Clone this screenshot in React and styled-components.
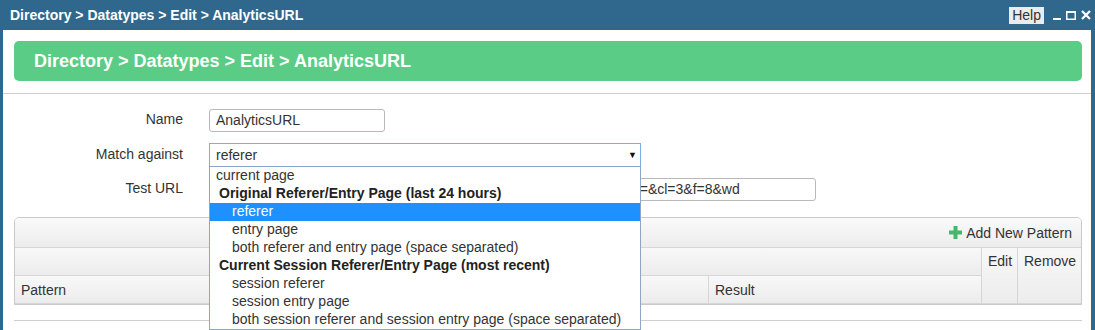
import React from "react";
import styled, { createGlobalStyle } from "styled-components";

const GlobalStyle = createGlobalStyle`
  html, body {
    margin: 0;
    padding: 0;
    background: #fff;
  }
  body {
    font-family: "Liberation Sans", Arial, sans-serif;
    font-size: 14px;
    color: #333;
  }
`;

const Window = styled.div`
  width: 1095px;
  height: 330px;
  overflow: hidden;
  display: flex;
  flex-direction: column;
  background: #2f688c;
`;

const TitleBar = styled.div`
  height: 30px;
  flex: none;
  display: flex;
  align-items: center;
  padding: 0 4px 0 10px;
  color: #fff;
  font-weight: bold;
  font-size: 14px;
`;

const TitleText = styled.div`
  flex: 1;
`;

const HelpButton = styled.button`
  height: 17px;
  padding: 0 3px;
  border: none;
  background: #ececec;
  color: #333;
  font-family: inherit;
  font-size: 14px;
  line-height: 17px;
  margin-right: 4px;
`;

const WinIcon = styled.svg`
  display: block;
  margin-left: 5px;
`;

const Body = styled.div`
  flex: 1;
  background: #fff;
  margin: 0 4px 0 3px;
  padding-top: 11px;
`;

const Banner = styled.div`
  height: 40px;
  margin: 0 9px 0 11px;
  border-radius: 5px;
  background: #5acc85;
  color: #fff;
  font-weight: bold;
  font-size: 18px;
  display: flex;
  align-items: center;
  padding-left: 20px;
`;

const Divider = styled.div`
  height: 1px;
  background: #cfcfcf;
  margin: ${(p) => p.$margin};
`;

const Form = styled.div`
  display: grid;
  grid-template-columns: 180px auto;
  column-gap: 26px;
  row-gap: 11px;
  padding-top: 15px;
  justify-items: start;
`;

const Label = styled.div`
  justify-self: end;
  align-self: center;
  margin-bottom: 3px;
  color: #333;
`;

const TextInput = styled.div`
  box-sizing: border-box;
  width: ${(p) => p.$width}px;
  height: 23px;
  border: 1px solid #b9b9b9;
  border-radius: 3px;
  padding: 0 6px;
  line-height: 21px;
  color: #333;
  white-space: nowrap;
  overflow: hidden;
`;

const SelectWrap = styled.div`
  position: relative;
`;

const SelectBox = styled.div`
  box-sizing: border-box;
  width: 432px;
  height: 24px;
  border: 1px solid #7aaee4;
  padding: 0 3px 0 6px;
  display: flex;
  align-items: center;
  justify-content: space-between;
  color: #333;
`;

const Caret = styled.span`
  font-size: 9px;
  color: #111;
`;

const OptionList = styled.div`
  position: absolute;
  top: 100%;
  left: 0;
  z-index: 5;
  box-sizing: border-box;
  width: 432px;
  background: #fff;
  border: 1px solid #8ea6c6;
  margin-top: -1px;
`;

const Option = styled.div`
  height: 18px;
  line-height: 17px;
  padding-left: ${(p) => (p.$group ? 9 : p.$indent ? 22 : 6)}px;
  font-weight: ${(p) => (p.$group ? "bold" : "normal")};
  background: ${(p) => (p.$selected ? "#1e90ff" : "transparent")};
  color: ${(p) => (p.$selected ? "#fff" : p.$group ? "#222" : "#333")};
  white-space: nowrap;
`;

const Panel = styled.div`
  margin: 16px 9px 0 11px;
  border: 1px solid #c9c9c9;
  border-radius: 5px 5px 0 0;
  overflow: hidden;
`;

const Toolbar = styled.div`
  height: 29px;
  display: flex;
  align-items: center;
  justify-content: flex-end;
  padding-right: 9px;
  background: linear-gradient(#fafafa, #ececec);
  border-bottom: 1px solid #d6d6d6;
  color: #333;
`;

const AddButton = styled.div`
  display: flex;
  align-items: center;
  gap: 4px;
`;

const Grid = styled.div`
  display: grid;
  grid-template-columns: 694px 273px 36px 1fr;
  grid-template-rows: 28px 28px;
`;

const Cell = styled.div`
  background: linear-gradient(#f8f8f8, #ececec);
  border-right: ${(p) => (p.$last ? "none" : "1px solid #d6d6d6")};
  border-bottom: 1px solid #d6d6d6;
  padding: ${(p) => (p.$top ? "5px 6px 0" : "0 6px")};
  display: flex;
  align-items: ${(p) => (p.$top ? "flex-start" : "center")};
  grid-column: ${(p) => p.$col || "auto"};
  grid-row: ${(p) => p.$row || "auto"};
  color: #333;
`;

const options = [
  { text: "current page" },
  { text: "Original Referer/Entry Page (last 24 hours)", group: true },
  { text: "referer", indent: true, selected: true },
  { text: "entry page", indent: true },
  { text: "both referer and entry page (space separated)", indent: true },
  { text: "Current Session Referer/Entry Page (most recent)", group: true },
  { text: "session referer", indent: true },
  { text: "session entry page", indent: true },
  { text: "both session referer and session entry page (space separated)", indent: true },
];

function PlusIcon() {
  return (
    <svg width="13" height="13" viewBox="0 0 13 13">
      <rect x="4.5" y="0" width="4" height="13" fill="#42b86a" />
      <rect x="0" y="4.5" width="13" height="4" fill="#42b86a" />
    </svg>
  );
}

export default function App() {
  return (
    <>
      <GlobalStyle />
      <Window>
        <TitleBar>
          <TitleText>Directory &gt; Datatypes &gt; Edit &gt; AnalyticsURL</TitleText>
          <HelpButton>Help</HelpButton>
          <WinIcon width="8" height="12" viewBox="0 0 8 12">
            <rect x="0" y="9" width="8" height="2" fill="#fff" />
          </WinIcon>
          <WinIcon width="10" height="12" viewBox="0 0 10 12">
            <rect x="0.75" y="2.75" width="8.5" height="7.5" fill="none" stroke="#fff" strokeWidth="1.5" />
            <rect x="0" y="2" width="10" height="2" fill="#fff" />
          </WinIcon>
          <WinIcon width="10" height="12" viewBox="0 0 10 12">
            <path d="M1 2 L9 10 M9 2 L1 10" stroke="#fff" strokeWidth="2.2" />
          </WinIcon>
        </TitleBar>
        <Body>
          <Banner>Directory &gt; Datatypes &gt; Edit &gt; AnalyticsURL</Banner>
          <Divider $margin="12px 0 0" />
          <Form>
            <Label>Name</Label>
            <TextInput $width={176}>AnalyticsURL</TextInput>
            <Label>Match against</Label>
            <SelectWrap>
              <SelectBox>
                <span>referer</span>
                <Caret>▼</Caret>
              </SelectBox>
              <OptionList>
                {options.map((o) => (
                  <Option
                    key={o.text}
                    $group={o.group}
                    $indent={o.indent}
                    $selected={o.selected}
                  >
                    {o.text}
                  </Option>
                ))}
              </OptionList>
            </SelectWrap>
            <Label>Test URL</Label>
            <TextInput $width={607}>
              https://www.google.com/url?sa=t&amp;rct=j&amp;q=&amp;esrc=s&amp;source=web&amp;cd=&amp;cl=3&amp;f=8&amp;wd
            </TextInput>
          </Form>
          <Panel>
            <Toolbar>
              <AddButton>
                <PlusIcon />
                Add New Pattern
              </AddButton>
            </Toolbar>
            <Grid>
              <Cell $col="1 / 3" $row="1" />
              <Cell $col="3" $row="1 / 3" $top>
                Edit
              </Cell>
              <Cell $col="4" $row="1 / 3" $top $last>
                Remove
              </Cell>
              <Cell $col="1" $row="2">
                Pattern
              </Cell>
              <Cell $col="2" $row="2">
                Result
              </Cell>
            </Grid>
          </Panel>
          <Divider $margin="15px 9px 0 11px" />
        </Body>
      </Window>
    </>
  );
}
